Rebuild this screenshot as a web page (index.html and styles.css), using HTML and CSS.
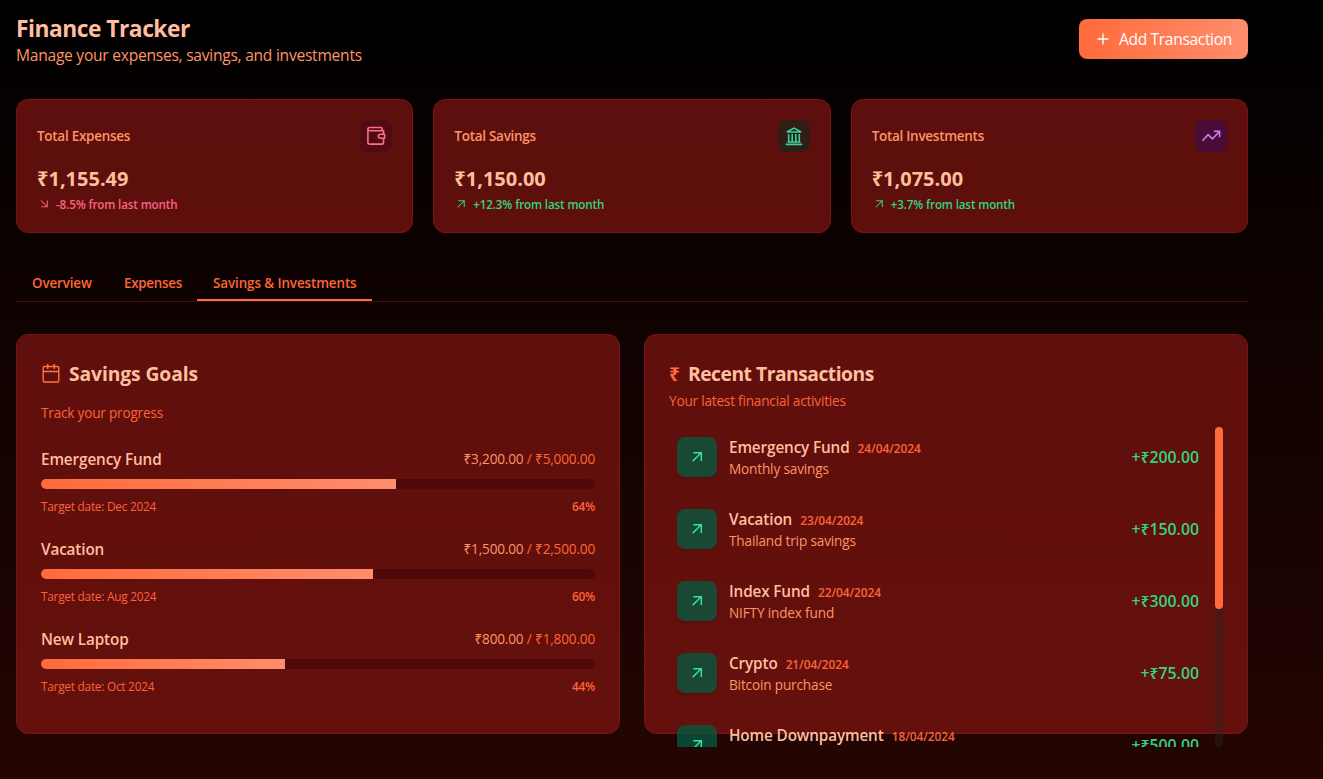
FILE: index.html
```
<!DOCTYPE html>
<html lang="en">
<head>
<meta charset="utf-8">
<title>Finance Tracker</title>
<link rel="stylesheet" href="styles.css">
</head>
<body>
<svg class="defs" width="0" height="0">
  <symbol id="up" viewBox="0 0 24 24"><path d="M5.500 18.500 17.500 6.500M6.500 5.500h12V18"/></symbol>
  <symbol id="down" viewBox="0 0 24 24"><path d="m6 5 12 12M18.500 5v12.500H6.500"/></symbol>
</svg>
<main class="page">
  <header class="header">
    <div>
      <h1 class="title">Finance Tracker</h1>
      <p class="subtitle">Manage your expenses, savings, and investments</p>
    </div>
    <button class="add"><svg class="plus" viewBox="0 0 12 12"><path d="M6 .5v11M.5 6h11"/></svg><span>Add Transaction</span></button>
  </header>

  <section class="stats">
    <article class="card stat">
      <div class="stat-top"><span class="stat-label">Total Expenses</span>
        <span class="badge badge-rose"><svg viewBox="0 0 20 20"><path d="M17.500 7.600V4.700H4Q1.900 4.700 1.900 3M16.100 4.500V2.700Q16.100 1.500 15 1.500H3.500Q1.900 1.500 1.900 3v13.200q0 1.900 1.900 1.900h12q1.700 0 1.700-1.700V12.500M18.600 8.300h-4.300a1.900 1.900 0 0 0 0 3.900h4.300z"/></svg></span>
      </div>
      <div class="stat-value">₹1,155.49</div>
      <div class="change rose"><svg class="arrow-sm"><use href="#down"/></svg><span>-8.5% from last month</span></div>
    </article>
    <article class="card stat">
      <div class="stat-top"><span class="stat-label">Total Savings</span>
        <span class="badge badge-green"><svg viewBox="0 0 20 20"><path d="M1.700 18.400h16.600M3.500 16h13M4.700 8v7.500M8.200 8v7.500M11.800 8v7.500M15.300 8v7.500M2.900 6h14.200L10 2.100z"/></svg></span>
      </div>
      <div class="stat-value">₹1,150.00</div>
      <div class="change green"><svg class="arrow-sm"><use href="#up"/></svg><span>+12.3% from last month</span></div>
    </article>
    <article class="card stat">
      <div class="stat-top"><span class="stat-label">Total Investments</span>
        <span class="badge badge-purple"><svg viewBox="0 0 20 20"><path d="m1.500 14.700 5.600-6 4.300 4.100L18.500 5.500M12.800 5.300h5.800v5.900"/></svg></span>
      </div>
      <div class="stat-value">₹1,075.00</div>
      <div class="change green"><svg class="arrow-sm"><use href="#up"/></svg><span>+3.7% from last month</span></div>
    </article>
  </section>

  <nav class="tabs">
    <a class="tab tab-overview">Overview</a>
    <a class="tab tab-expenses">Expenses</a>
    <a class="tab tab-savings active">Savings &amp; Investments</a>
  </nav>

  <section class="panels">
    <article class="card panel">
      <h2 class="heading"><svg class="calendar" viewBox="0 0 20 20"><path d="M3.500 2.500h13q1.300 0 1.300 1.300v12.900q0 1.300-1.300 1.300h-13q-1.300 0-1.300-1.300V3.800q0-1.300 1.300-1.300zM2.200 7.500h15.600M6.700 0v5M13.300 0v5"/></svg><span class="heading-goals">Savings Goals</span></h2>
      <p class="note note-goals">Track your progress</p>
      <div class="goals">
        <div class="goal">
          <div class="line"><span class="name">Emergency Fund</span><span class="sum">₹3,200.00 <span class="of">/ ₹5,000.00</span></span></div>
          <div class="track"><div class="fill" style="width:64%"></div></div>
          <div class="line meta"><span>Target date: Dec 2024</span><span class="percent">64%</span></div>
        </div>
        <div class="goal">
          <div class="line"><span class="name">Vacation</span><span class="sum">₹1,500.00 <span class="of">/ ₹2,500.00</span></span></div>
          <div class="track"><div class="fill" style="width:60%"></div></div>
          <div class="line meta"><span>Target date: Aug 2024</span><span class="percent">60%</span></div>
        </div>
        <div class="goal">
          <div class="line"><span class="name">New Laptop</span><span class="sum">₹800.00 <span class="of">/ ₹1,800.00</span></span></div>
          <div class="track"><div class="fill" style="width:44%"></div></div>
          <div class="line meta"><span>Target date: Oct 2024</span><span class="percent">44%</span></div>
        </div>
      </div>
    </article>

    <article class="card panel">
      <h2 class="heading"><span class="rupee">₹</span><span class="heading-recent">Recent Transactions</span></h2>
      <p class="note">Your latest financial activities</p>
      <div class="scroller">
        <div class="rows">
          <div class="row"><span class="tile"><svg><use href="#up"/></svg></span><div class="info"><div class="who"><span class="name">Emergency Fund</span><span class="date">24/04/2024</span></div><div class="desc">Monthly savings</div></div><span class="amount">+₹200.00</span></div>
          <div class="row"><span class="tile"><svg><use href="#up"/></svg></span><div class="info"><div class="who"><span class="name">Vacation</span><span class="date">23/04/2024</span></div><div class="desc">Thailand trip savings</div></div><span class="amount">+₹150.00</span></div>
          <div class="row"><span class="tile"><svg><use href="#up"/></svg></span><div class="info"><div class="who"><span class="name">Index Fund</span><span class="date">22/04/2024</span></div><div class="desc">NIFTY index fund</div></div><span class="amount">+₹300.00</span></div>
          <div class="row"><span class="tile"><svg><use href="#up"/></svg></span><div class="info"><div class="who"><span class="name">Crypto</span><span class="date">21/04/2024</span></div><div class="desc">Bitcoin purchase</div></div><span class="amount">+₹75.00</span></div>
          <div class="row"><span class="tile"><svg><use href="#up"/></svg></span><div class="info"><div class="who"><span class="name">Home Downpayment</span><span class="date">18/04/2024</span></div></div><span class="amount">+₹500.00</span></div>
        </div>
        <div class="rail"><div class="thumb"></div></div>
      </div>
    </article>
  </section>
</main>
</body>
</html>
```
FILE: styles.css
```
* { box-sizing: border-box; margin: 0; padding: 0; }
body {
  height: 779px;
  overflow: hidden;
  font-family: "Open Sans", "Noto Sans", sans-serif;
  color: #ffbf9f;
  background: linear-gradient(180deg, #000 0%, #240502 100%);
}
svg { fill: none; stroke: currentColor; stroke-width: 1.4; flex: none; }
.defs { position: absolute; }
span { white-space: nowrap; }
.page { width: 1264px; padding: 11px 16px 0; }

.header { display: flex; justify-content: space-between; align-items: center; height: 56px; margin-bottom: 32px; }
.title { font-size: 22.8px; line-height: 32px; height: 33px; font-weight: 700; letter-spacing: -0.5px; padding-top: 2px; }
.subtitle { font-size: 15.6px; line-height: 23px; color: #ff9466; letter-spacing: -0.26px; }
.add {
  display: flex; align-items: center; gap: 10px;
  width: 169px; height: 40px; padding-left: 18px;
  border: 0; border-radius: 8px; color: #fff;
  font: 400 15.6px/24px "Open Sans", "Noto Sans", sans-serif; letter-spacing: -0.35px;
  background: linear-gradient(90deg, #ff6b3b, #ff8d6c);
}
.plus { width: 12px; height: 12px; stroke-width: 1.3; }

.card { border: 1px solid #7b1411; border-radius: 12px; background: rgba(130, 21, 17, 0.7); }
.stats { display: grid; grid-template-columns: repeat(3, 1fr); gap: 20px; margin-bottom: 32px; }
.stat { height: 134px; padding: 20px; }
.stat-top { display: flex; justify-content: space-between; align-items: center; margin-bottom: 12px; }
.stat-label { font-size: 13.5px; line-height: 20px; font-weight: 600; color: #ff9466; letter-spacing: -0.28px; }
.badge { display: flex; align-items: center; justify-content: center; width: 32px; height: 32px; border-radius: 8px; }
.badge svg { width: 20px; height: 20px; stroke-width: 1.6; }
.badge-rose { color: #fb7185; background: #520a13; }
.badge-green { color: #34d399; background: #321c16; }
.badge-purple { color: #c084fc; background: #4a0b35; }
.stat-value { font-size: 20px; line-height: 28px; font-weight: 700; padding-top: 1px; height: 28px; margin-bottom: 4px; }
.change { display: flex; align-items: center; gap: 5px; height: 16px; font-size: 11.6px; line-height: 16px; font-weight: 600; letter-spacing: -0.13px; }
.change span { padding-top: 1px; }
.arrow-sm { width: 14px; height: 12px; stroke-width: 2.100; }
.rose { color: #fb6480; }
.green { color: #34d384; }

.tabs { display: flex; height: 37px; margin-bottom: 32px; border-bottom: 1px solid #43100d; }
.tab { height: 36px; padding: 8px 0 0 16px; font-size: 13.4px; line-height: 21px; font-weight: 600; color: #ff6535; letter-spacing: -0.12px; white-space: nowrap; }
.tab-overview { width: 92px; }
.tab-expenses { width: 89px; letter-spacing: -0.28px; }
.tab-savings { width: 175px; letter-spacing: -0.09px; }
.active { border-bottom: 2px solid #ff6b3b; }

.panels { display: grid; grid-template-columns: 1fr 1fr; gap: 24px; }
.panel { height: 400px; padding: 25px 24px 0; }
.heading { display: flex; align-items: center; gap: 8px; font-size: 19.3px; line-height: 28px; font-weight: 700; }
.heading-goals { letter-spacing: -0.1px; }
.heading-recent { letter-spacing: -0.5px; }
.calendar { width: 20px; height: 20px; color: #ff7345; }
.rupee { color: #ff6b3b; font-size: 19px; width: 11px; }
.note { font-size: 13.6px; line-height: 20px; color: #ff6239; letter-spacing: -0.2px; margin-top: 3px; height: 20px; }
.note-goals { margin-top: 15px; }

.goals { display: grid; gap: 24px; margin-top: 24px; }
.goal { height: 66px; }
.line { display: flex; justify-content: space-between; align-items: center; }
.name { font-size: 15.3px; line-height: 24px; font-weight: 600; letter-spacing: -0.13px; }
.sum { font-size: 13.6px; line-height: 20px; color: #ff9466; letter-spacing: -0.17px; padding-bottom: 1px; }
.of { color: #ff6535; }
.track { height: 10px; margin: 8px 0 9px; border-radius: 5px; overflow: hidden; background: #4f0909; }
.fill { height: 10px; background: linear-gradient(90deg, #ff6b3b, #ff8d6c); }
.meta { font-size: 11.8px; line-height: 16px; color: #ff6239; letter-spacing: -0.23px; }
.percent { font-weight: 600; }

.scroller { display: flex; justify-content: space-between; height: 320px; margin-top: 16px; overflow: hidden; }
.rows { width: 538px; }
.row { display: flex; align-items: center; height: 60px; margin-bottom: 12px; padding: 0 8px; }
.tile { display: flex; align-items: center; justify-content: center; width: 40px; height: 40px; border-radius: 8px; color: #34e3a4; background: rgba(4, 90, 67, 0.77); box-shadow: 0 1px 2px rgba(0, 0, 0, 0.2); }
.tile svg { width: 20px; height: 16px; stroke-width: 2.200; }
.info { flex: 1; height: 44px; margin-left: 12px; }
.who { display: flex; align-items: center; gap: 8px; }
.date { font-size: 11.9px; line-height: 16px; padding-top: 1px; font-weight: 600; color: #ff6239; letter-spacing: -0.05px; }
.desc { font-size: 13.6px; line-height: 20px; color: #ff9466; letter-spacing: -0.16px; }
.amount { font-size: 15.8px; line-height: 24px; font-weight: 600; color: #34d384; }
.rail { width: 8px; height: 320px; border-radius: 4px; background: rgba(38, 38, 38, 0.4); }
.thumb { height: 182px; border-radius: 4px; background: #ff6b3b; }
```
